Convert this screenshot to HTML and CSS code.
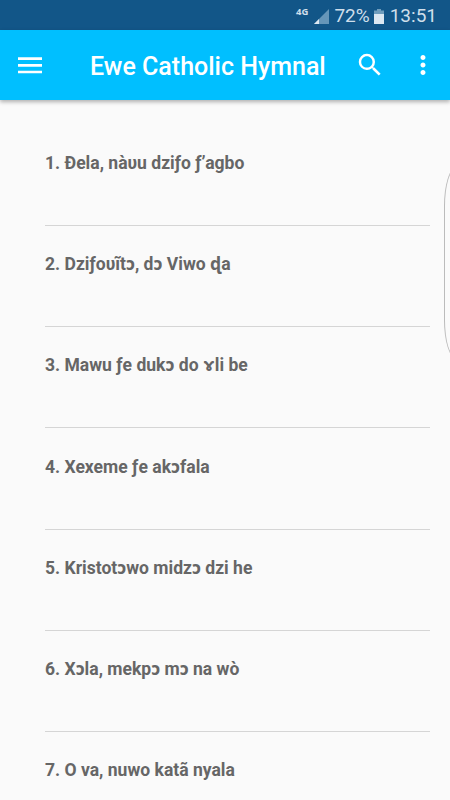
FILE: index.html
```html
<!DOCTYPE html>
<html lang="ee">
<head>
  <meta charset="UTF-8" />
  <meta name="viewport" content="width=device-width, initial-scale=1" />
  <title>Ewe Catholic Hymnal</title>
  <link rel="stylesheet" href="styles.css">
</head>
<body>
  <div class="status-bar">
    <span class="network">4G</span>
    <svg class="signal" width="15" height="15" viewBox="0 0 15 15" aria-hidden="true">
      <path d="M15 0V15H0Z" fill="#6696b9" />
      <path d="M5 10V15H0Z" fill="#dce8f2" />
    </svg>
    <span class="percent">72%</span>
    <svg class="battery" width="10" height="15" viewBox="0 0 10 15" aria-hidden="true">
      <path d="M3 0H7V1.5H10V5H0V1.5H3Z" fill="#6f9dbd" />
      <path d="M0 5H10V15H0Z" fill="#dce8f2" />
    </svg>
    <span class="clock">13:51</span>
  </div>

  <header class="app-bar">
    <button type="button" class="icon-btn menu-btn" aria-label="Menu">
      <svg width="24" height="17" viewBox="0 0 24 17">
        <path d="M0 0.3H24V2.9H0ZM0 7.1H24V9.7H0ZM0 13.7H24V16.3H0Z" fill="currentColor" />
      </svg>
    </button>
    <h1>Ewe Catholic Hymnal</h1>
    <button type="button" class="icon-btn search-btn" aria-label="Search">
      <svg width="30" height="30" viewBox="0 0 24 24">
        <path d="M15.5 14h-.79l-.28-.27A6.47 6.47 0 0 0 16 9.5 6.5 6.5 0 1 0 9.5 16c1.61 0 3.09-.59 4.23-1.57l.27.28v.79l5 4.99L20.49 19l-4.99-5zm-6 0C7.01 14 5 11.99 5 9.5S7.01 5 9.5 5 14 7.01 14 9.5 11.99 14 9.5 14z" fill="currentColor" />
      </svg>
    </button>
    <button type="button" class="icon-btn more-btn" aria-label="More options">
      <svg width="30" height="30" viewBox="0 0 24 24">
        <path d="M12 8c1.1 0 2-.9 2-2s-.9-2-2-2-2 .9-2 2 .9 2 2 2zm0 2c-1.1 0-2 .9-2 2s.9 2 2 2 2-.9 2-2-.9-2-2-2zm0 6c-1.1 0-2 .9-2 2s.9 2 2 2 2-.9 2-2-.9-2-2-2z" fill="currentColor" />
      </svg>
    </button>
  </header>

  <main>
    <ul class="hymns">
      <li>1. Ðela, nàυu dziƒo ƒ’agbo</li>
      <li>2. Dziƒoυĩtɔ, dɔ Viwo ɖa</li>
      <li>3. Mawu ƒe dukɔ do <span class="gamma">ɤ</span>li be</li>
      <li>4. Xexeme ƒe akɔfala</li>
      <li>5. Kristotɔwo midzɔ dzi he</li>
      <li>6. Xɔla, mekpɔ mɔ na wò</li>
      <li>7. O va, nuwo katã nyala</li>
    </ul>
  </main>

  <!-- edge panel handle -->
  <div class="edge-handle"></div>
</body>
</html>
```
FILE: styles.css
```css
/* Reset and base */
* {
  box-sizing: border-box;
}
body {
  position: relative;
  height: 800px;
  margin: 0;
  overflow: hidden;
  font-family: Roboto, "Noto Sans", sans-serif;
  background-color: #fafafa;
  color: #666;
}

/* Status bar */
.status-bar {
  display: flex;
  align-items: center;
  justify-content: flex-end;
  height: 30px;
  padding: 2px 13px 0 0;
  background-color: #125688;
  color: #cfdfeb;
  font-size: 19px;
  line-height: 28px;
}
.network {
  margin: -8px 6px 0 0;
  font-family: "Noto Sans", sans-serif;
  font-size: 9.5px;
  font-weight: 700;
  line-height: 12px;
}
.signal {
  margin-right: 5px;
}
.battery {
  margin: 0 6px 0 4px;
}

/* App bar */
.app-bar {
  display: flex;
  align-items: center;
  position: relative;
  height: 70px;
  padding: 0 12px 0 18px;
  background-color: #00bfff;
  color: #fff;
  box-shadow: 0 2px 4px rgba(0, 0, 0, 0.3);
}
.icon-btn {
  display: flex;
  padding: 0;
  border: none;
  background: none;
  color: inherit;
  cursor: pointer;
}
h1 {
  flex: 1;
  margin: 4px 0 0 48px;
  font-size: 25px;
  font-weight: 500;
  line-height: 30px;
  white-space: nowrap;
}
.more-btn {
  margin-left: 23px;
}

/* Hymn list */
.hymns {
  margin: 0;
  padding: 24.5px 20px 0 45px;
  list-style: none;
}
.hymns li {
  height: 101.25px;
  padding-top: 27.25px;
  border-bottom: 1px solid #d5d5d5;
  font-size: 17.55px;
  font-weight: 700;
  line-height: 22px;
  white-space: nowrap;
}
.gamma {
  padding: 0 1px;
  font-family: "Noto Sans", sans-serif;
  line-height: 1;
}

.edge-handle {
  position: absolute;
  top: 168px;
  right: -20px;
  width: 26px;
  height: 190px;
  border: 1px solid #888;
  border-left-color: #bbb;
  border-radius: 12px / 38px;
  background-color: #fafafa;
}
```
